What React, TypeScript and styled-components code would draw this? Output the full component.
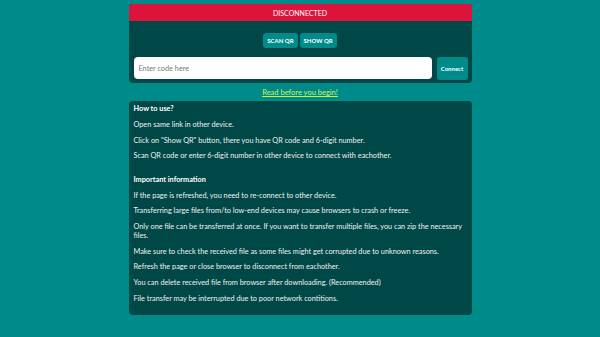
import React from 'react';
import styled, { createGlobalStyle } from 'styled-components';

const GlobalStyle = createGlobalStyle`
	html, body {
		margin: 0;
		padding: 0;
		background: #008b8b;
		font-family: Lato, 'Open Sans', sans-serif;
	}
	* {
		box-sizing: border-box;
	}
`;

const Page = styled.div`
	min-height: 337px;
	padding-top: 4px;
	display: flex;
	flex-direction: column;
	align-items: center;
`;

const Card = styled.div`
	width: 343px;
	background: #004848;
	border-radius: 4px;
	overflow: hidden;
`;

const StatusBar = styled.div`
	height: 17px;
	background: #dc143c;
	color: #fff;
	font-size: 7px;
	display: flex;
	align-items: center;
	justify-content: center;
`;

const QrRow = styled.div`
	display: flex;
	justify-content: center;
	gap: 2px;
	padding-top: 12px;
`;

const SmallButton = styled.button`
	height: 15px;
	padding: 0 4px;
	border: none;
	border-radius: 3px;
	background: #008b8b;
	color: #fff;
	font-family: inherit;
	font-size: 6px;
	font-weight: bold;
	cursor: pointer;
`;

const ConnectRow = styled.div`
	display: flex;
	gap: 5px;
	padding: 9px 4px 3px 5px;
`;

const CodeInput = styled.input`
	flex: 1;
	height: 22px;
	border: none;
	border-radius: 4px;
	padding: 0 5px;
	font-family: inherit;
	font-size: 7.3px;
	color: #333;
	outline: none;
	&::placeholder {
		color: #777;
	}
`;

const ConnectButton = styled(SmallButton)`
	height: 23px;
	width: 31px;
	padding: 0;
`;

const ReadLink = styled.a`
	margin: 5px 0 4px;
	color: #d4f03c;
	font-size: 7.5px;
	text-decoration: underline;
	line-height: 9px;
`;

const InfoPanel = styled.div`
	width: 343px;
	background: #004848;
	border-radius: 4px;
	padding: 4px 5px 12px;
	color: #eef2ee;
	font-size: 7.3px;
	line-height: 8.5px;
`;

const Section = styled.div<{ $gap?: number }>`
	margin-top: ${(p) => p.$gap ?? 0}px;
	display: flex;
	flex-direction: column;
	gap: 7.3px;
`;

const Heading = styled.div`
	font-weight: bold;
	color: #fff;
`;

const Line = styled.div``;

const howTo = [
	'Open same link in other device.',
	'Click on "Show QR" button, there you have QR code and 6-digit number.',
	'Scan QR code or enter 6-digit number in other device to connect with eachother.',
];

const notes = [
	'If the page is refreshed, you need to re-connect to other device.',
	'Transferring large files from/to low-end devices may cause browsers to crash or freeze.',
	'Only one file can be transferred at once. If you want to transfer multiple files, you can zip the necessary files.',
	'Make sure to check the received file as some files might get corrupted due to unknown reasons.',
	'Refresh the page or close browser to disconnect from eachother.',
	'You can delete received file from browser after downloading. (Recommended)',
	'File transfer may be interrupted due to poor network contitions.',
];

export default function App(): JSX.Element {
	return (
		<>
			<GlobalStyle />
			<Page>
				<Card>
					<StatusBar>DISCONNECTED</StatusBar>
					<QrRow>
						<SmallButton>SCAN QR</SmallButton>
						<SmallButton>SHOW QR</SmallButton>
					</QrRow>
					<ConnectRow>
						<CodeInput placeholder='Enter code here' />
						<ConnectButton>Connect</ConnectButton>
					</ConnectRow>
				</Card>
				<ReadLink href='#'>Read before you begin!</ReadLink>
				<InfoPanel>
					<Section>
						<Heading>How to use?</Heading>
						{howTo.map((t) => (
							<Line key={t}>{t}</Line>
						))}
					</Section>
					<Section $gap={15}>
						<Heading>Important information</Heading>
						{notes.map((t) => (
							<Line key={t}>{t}</Line>
						))}
					</Section>
				</InfoPanel>
			</Page>
		</>
	);
}
